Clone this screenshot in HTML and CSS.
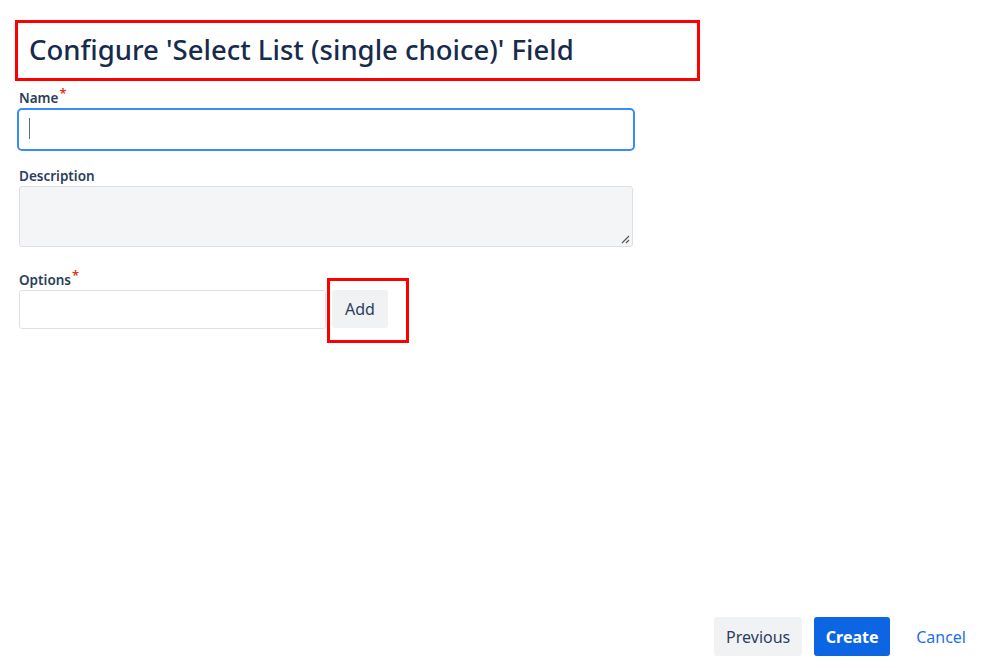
FILE: index.html
```html
<!DOCTYPE html>
<html lang="en">
<head>
<meta charset="utf-8">
<title>Configure field</title>
<link rel="stylesheet" href="styles.css">
</head>
<body>
<div class="page">
  <h1 class="title">Configure 'Select List (single choice)' Field</h1>
  <div class="field">
    <label class="label">Name<span class="req">*</span></label>
    <div class="input input-focus"><span class="caret"></span></div>
  </div>
  <div class="field field-desc">
    <label class="label">Description</label>
    <div class="textarea">
      <svg class="grip" width="9" height="9" viewBox="0 0 9 9"><path d="M8 1 L1 8 M8 5 L5 8" stroke="#555" stroke-width="1.2" fill="none"/></svg>
    </div>
  </div>
  <div class="field field-opts">
    <label class="label">Options<span class="req">*</span></label>
    <div class="opt-row">
      <div class="input opt-input"></div>
      <span class="add-wrap"><button class="btn btn-add">Add</button></span>
    </div>
  </div>
  <div class="footer">
    <button class="btn btn-prev">Previous</button>
    <button class="btn btn-create">Create</button>
    <button class="btn btn-cancel">Cancel</button>
  </div>
</div>
</body>
</html>
```
FILE: styles.css
```css
*, *::before, *::after { box-sizing: border-box; }
html, body { margin: 0; padding: 0; background: #fff; }
body { font-family: "Noto Sans", "Open Sans", sans-serif; color: #172b4d; }
.page {
  min-height: 668px;
  display: flex;
  flex-direction: column;
  padding-top: 20px;
}
.title {
  margin: 0 0 0 15px;
  width: 685px;
  height: 61px;
  border: 3px solid #ff0000;
  padding: 0 11px;
  font-size: 27.5px;
  font-weight: 500;
  line-height: 53px;
  color: #172b4d;
  white-space: nowrap;
}
.field { padding-left: 19px; }
.label {
  display: block;
  margin-top: 9px;
  font-size: 13.5px;
  line-height: 17px;
  height: 17px;
  font-weight: 600;
  color: #2c3e5d;
}
.req { color: #de350b; font-size: 13px; position: relative; top: -5px; margin-left: 1px; }
.input {
  margin-top: 1px;
  height: 39px;
  border: 1px solid #dfe1e6;
  border-radius: 3px;
  background: #fff;
}
.input-focus {
  margin-left: -2px;
  width: 618px;
  height: 43px;
  border: 2px solid #388bff;
  border-radius: 5px;
  padding: 8px 0 0 10px;
}
.caret { display: block; width: 1px; height: 21px; background: #5e6c84; }
.field-desc .label { margin-top: 17px; }
.textarea {
  position: relative;
  margin-top: 1px;
  width: 614px;
  height: 61px;
  border: 1px solid #dcdfe4;
  border-radius: 3px;
  background: #f4f5f7;
}
.grip { position: absolute; right: 2px; bottom: 2px; }
.field-opts .label { margin-top: 25px; }
.opt-row { display: flex; align-items: flex-start; margin-top: 1px; }
.opt-input { margin-top: 0; width: 307px; }
.add-wrap { position: relative; margin-left: 6px; display: block; }
.add-wrap::after {
  content: "";
  position: absolute;
  left: -5px;
  top: -12px;
  width: 82px;
  height: 65px;
  border: 3px solid #ff0000;
}
.btn {
  font-family: "Noto Sans", "Open Sans", sans-serif;
  font-size: 16px;
  border: none;
  border-radius: 3px;
  height: 39px;
  padding: 0 12px;
  cursor: pointer;
}
.btn-add { display: block; background: #f1f2f4; color: #2c3e5d; width: 56px; padding: 0; height: 38px; }
.footer {
  margin-top: auto;
  display: flex;
  justify-content: flex-end;
  gap: 12px;
  padding: 0 19px 12px 0;
}
.btn-prev { background: #f1f2f4; color: #2c3e5d; width: 88px; padding: 0; }
.btn-create { background: #0c66e4; color: #fff; font-weight: 700; width: 76px; padding: 0; }
.btn-cancel { background: transparent; color: #1f6fe5; padding: 0 14px; }
```
